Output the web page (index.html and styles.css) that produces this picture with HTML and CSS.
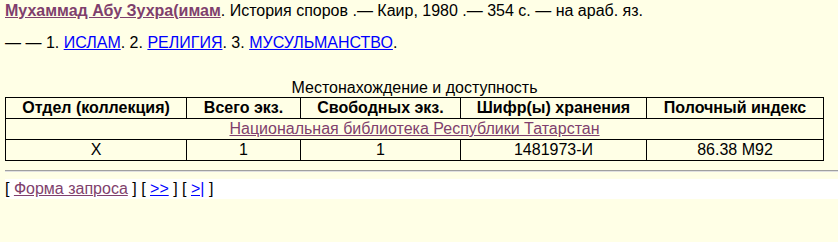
FILE: index.html
```html
<!DOCTYPE html>
<html>
<head>
<meta charset="utf-8">
<link rel="stylesheet" href="styles.css">
</head>
<body>
<div class="record">
  <div class="line"><a class="visited author" href="#">Мухаммад Абу Зухра(имам</a>. История споров .— Каир, 1980 .— 354 с. — на араб. яз.</div>
  <div class="line subjects">— — 1. <a class="link" href="#">ИСЛАМ</a>. 2. <a class="link" href="#">РЕЛИГИЯ</a>. 3. <a class="link" href="#">МУСУЛЬМАНСТВО</a>.</div>
</div>
<table class="holdings">
  <caption>Местонахождение и доступность</caption>
  <colgroup>
    <col class="c1"><col class="c2"><col class="c3"><col class="c4"><col class="c5">
  </colgroup>
  <tr>
    <th>Отдел (коллекция)</th>
    <th>Всего экз.</th>
    <th>Свободных экз.</th>
    <th>Шифр(ы) хранения</th>
    <th>Полочный индекс</th>
  </tr>
  <tr>
    <td colspan="5"><a class="visited" href="#">Национальная библиотека Республики Татарстан</a></td>
  </tr>
  <tr>
    <td>X</td>
    <td>1</td>
    <td>1</td>
    <td>1481973-И</td>
    <td>86.38 M92</td>
  </tr>
</table>
<hr class="sep">
<div class="nav">[ <a class="visited" href="#">Форма запроса</a> ] [ <a class="link" href="#">&gt;&gt;</a> ] [ <a class="link" href="#">&gt;|</a> ]</div>
</body>
</html>
```
FILE: styles.css
```css
html, body {
  margin: 0;
  background: #ffffe6;
}
body {
  padding: 2px 0 0 5px;
  font-family: "Liberation Sans", Arial, sans-serif;
  font-size: 16px;
  line-height: 18px;
  color: #000;
}
a.visited {
  color: #7f3f6d;
  text-decoration: underline;
}
a.link {
  color: #0000ff;
  text-decoration: underline;
}
.author {
  font-weight: bold;
}
.subjects {
  margin-top: 14px;
}
.holdings {
  margin-top: 28px;
  width: 818px;
  table-layout: fixed;
  border-collapse: collapse;
  border: 1px solid #000;
}
.holdings caption {
  text-align: center;
  line-height: 16px;
  padding-bottom: 1px;
}
.holdings th, .holdings td {
  border: 1px solid #000;
  text-align: center;
  padding: 1px 2px;
  height: 18px;
  white-space: nowrap;
}
.holdings th { font-weight: bold; }
.c1 { width: 181px; }
.c2 { width: 114px; }
.c3 { width: 160px; }
.c4 { width: 186px; }
.c5 { width: 177px; }
.sep {
  margin: 9px 0 0 0;
  border: 0;
  border-top: 1px solid #a0a0a0;
  border-bottom: 1px solid #e0e0e0;
  height: 0;
}
.nav {
  margin-top: 7px;
  background: #fff;
  padding: 1px 0;
}
```
